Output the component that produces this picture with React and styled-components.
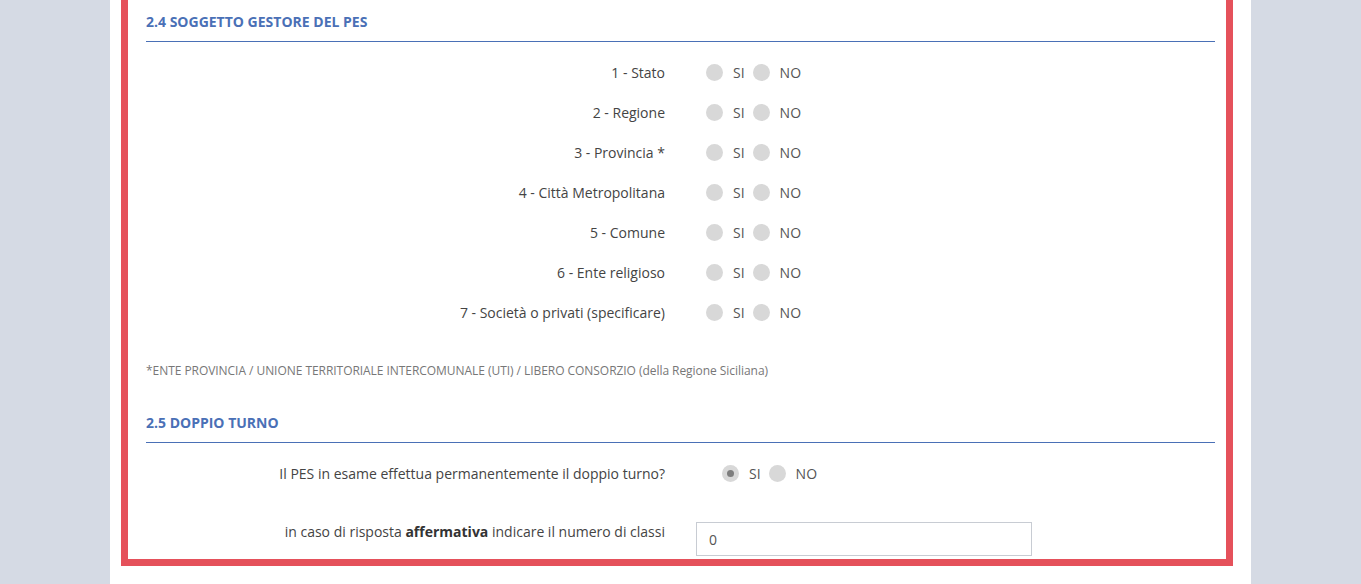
import React from "react";
import styled, { createGlobalStyle } from "styled-components";

const GlobalStyle = createGlobalStyle`
  html, body {
    margin: 0;
    padding: 0;
    background: #d5dae4;
    font-family: "Open Sans", "Liberation Sans", sans-serif;
  }
`;

const gestori = [
  "1 - Stato",
  "2 - Regione",
  "3 - Provincia *",
  "4 - Città Metropolitana",
  "5 - Comune",
  "6 - Ente religioso",
  "7 - Società o privati (specificare)",
];

const RadioPair = ({ name, checked, indent }) => (
  <RadioGroup $indent={indent}>
    <RadioOption>
      <Dot $checked={checked === "si"} />
      <span>SI</span>
    </RadioOption>
    <RadioOption>
      <Dot $checked={checked === "no"} />
      <span>NO</span>
    </RadioOption>
  </RadioGroup>
);

const App = () => {
  return (
    <>
      <GlobalStyle />
      <Page>
        <FormBox>
          <SectionTitle>2.4 SOGGETTO GESTORE DEL PES</SectionTitle>
          <Rows>
            {gestori.map(label => (
              <Row key={label}>
                <Label>{label}</Label>
                <RadioPair name={label} indent={10} />
              </Row>
            ))}
          </Rows>
          <Footnote>
            *ENTE PROVINCIA / UNIONE TERRITORIALE INTERCOMUNALE (UTI) / LIBERO CONSORZIO (della Regione Siciliana)
          </Footnote>

          <SectionTitle>2.5 DOPPIO TURNO</SectionTitle>
          <Rows>
            <Row>
              <Label>Il PES in esame effettua permanentemente il doppio turno?</Label>
              <RadioPair name="doppio" checked="si" indent={26} />
            </Row>
            <InputRow>
              <Label $flush>
                in caso di risposta <strong>affermativa</strong> indicare il numero di classi
              </Label>
              <TextField defaultValue="0" />
            </InputRow>
          </Rows>
        </FormBox>
      </Page>
    </>
  );
};

const Page = styled.div`
  width: 1141px;
  margin-left: 110px;
  min-height: 584px;
  background: #ffffff;
  padding: 0 18px 0 11px;
  box-sizing: border-box;
`;

const FormBox = styled.div`
  width: 1112px;
  box-sizing: border-box;
  border: 7px solid #e5515b;
  border-top: none;
  padding: 13px 11px 3px 18px;
`;

const SectionTitle = styled.h3`
  margin: 0;
  font-size: 14px;
  line-height: 18px;
  font-weight: 700;
  color: #4a70b6;
  padding-bottom: 10px;
  border-bottom: 1px solid #4a70b6;
`;

const Rows = styled.div`
  display: flex;
  flex-direction: column;
  padding-top: 10px;
`;

const Row = styled.div`
  display: grid;
  grid-template-columns: 519px 1fr;
  column-gap: 31px;
  align-items: center;
  height: 40px;
`;

const InputRow = styled(Row)`
  align-items: start;
  height: auto;
  margin-top: 29px;
`;

const Label = styled.div`
  text-align: right;
  font-size: 14px;
  line-height: 20px;
  padding-top: ${p => (p.$flush ? 0 : 2)}px;
  color: #444;

  strong {
    color: #333;
    font-weight: 700;
  }
`;

const RadioGroup = styled.div`
  display: flex;
  align-items: center;
  gap: 8px;
  padding-left: ${p => p.$indent}px;
`;

const RadioOption = styled.label`
  display: flex;
  align-items: center;
  gap: 10px;
  font-size: 14px;
  color: #555;
`;

const Dot = styled.span`
  width: 17px;
  height: 17px;
  border-radius: 50%;
  background: #d8d8d8;
  position: relative;

  &::after {
    content: "";
    display: ${p => (p.$checked ? "block" : "none")};
    position: absolute;
    left: 5px;
    top: 5px;
    width: 7px;
    height: 7px;
    border-radius: 50%;
    background: #7d7d7d;
  }
`;

const Footnote = styled.p`
  margin: 31px 0 35px;
  font-size: 12px;
  line-height: 16px;
  color: #777;
  letter-spacing: -0.05px;
`;

const TextField = styled.input`
  width: 336px;
  height: 34px;
  box-sizing: border-box;
  border: 1px solid #c8ccd3;
  padding: 0 12px;
  font-family: "Open Sans", "Liberation Sans", sans-serif;
  font-size: 14px;
  color: #555;
  outline: none;
`;

export default App;
